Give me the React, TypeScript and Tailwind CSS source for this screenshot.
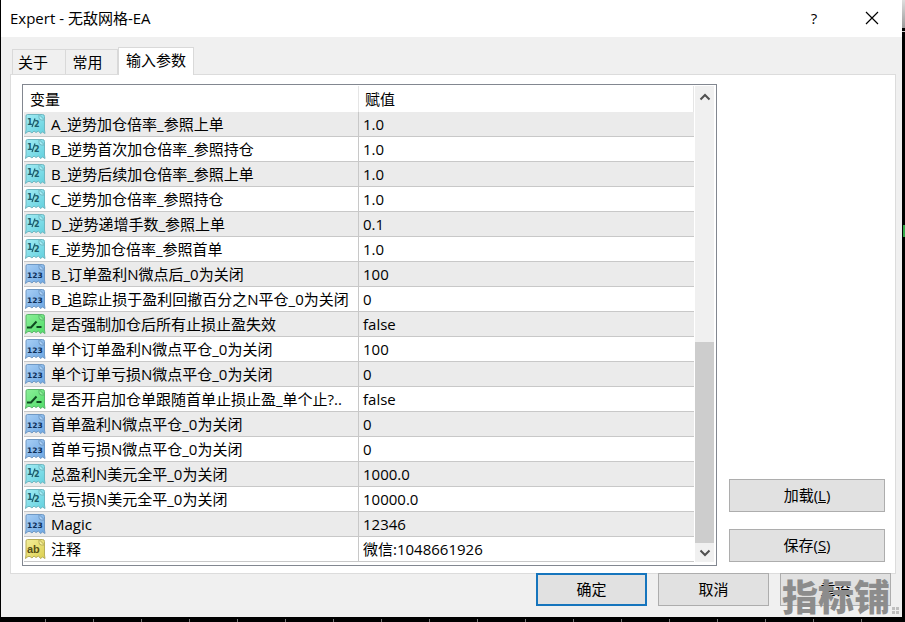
import type { ReactNode } from "react";

type Kind = "double" | "int" | "bool" | "string";

const rows: { kind: Kind; name: string; value: string }[] = [
  { kind: "double", name: "A_逆势加仓倍率_参照上单", value: "1.0" },
  { kind: "double", name: "B_逆势首次加仓倍率_参照持仓", value: "1.0" },
  { kind: "double", name: "B_逆势后续加仓倍率_参照上单", value: "1.0" },
  { kind: "double", name: "C_逆势加仓倍率_参照持仓", value: "1.0" },
  { kind: "double", name: "D_逆势递增手数_参照上单", value: "0.1" },
  { kind: "double", name: "E_逆势加仓倍率_参照首单", value: "1.0" },
  { kind: "int", name: "B_订单盈利N微点后_0为关闭", value: "100" },
  { kind: "int", name: "B_追踪止损于盈利回撤百分之N平仓_0为关闭", value: "0" },
  { kind: "bool", name: "是否强制加仓后所有止损止盈失效", value: "false" },
  { kind: "int", name: "单个订单盈利N微点平仓_0为关闭", value: "100" },
  { kind: "int", name: "单个订单亏损N微点平仓_0为关闭", value: "0" },
  { kind: "bool", name: "是否开启加仓单跟随首单止损止盈_单个止?..", value: "false" },
  { kind: "int", name: "首单盈利N微点平仓_0为关闭", value: "0" },
  { kind: "int", name: "首单亏损N微点平仓_0为关闭", value: "0" },
  { kind: "double", name: "总盈利N美元全平_0为关闭", value: "1000.0" },
  { kind: "double", name: "总亏损N美元全平_0为关闭", value: "10000.0" },
  { kind: "int", name: "Magic", value: "12346" },
  { kind: "string", name: "注释", value: "微信:1048661926" },
];

const palette: Record<Kind, { from: string; to: string; edge: string; ink: string }> = {
  double: { from: "#a4ecf4", to: "#62d0de", edge: "#6fb6c0", ink: "#1b5c6b" },
  int: { from: "#a9cff5", to: "#6ba6e2", edge: "#7099c4", ink: "#0d2f58" },
  bool: { from: "#8df09a", to: "#4fdc68", edge: "#5bb56c", ink: "#0e4a20" },
  string: { from: "#f3ee9b", to: "#dccf4e", edge: "#b8ae58", ink: "#574f14" },
};

function TypeIcon({ kind }: { kind: Kind }) {
  const { from, to, edge, ink } = palette[kind];
  return (
    <svg width="22" height="22" viewBox="0 0 22 22" className="shrink-0" aria-hidden="true">
      <defs>
        <linearGradient id={`fill-${kind}`} x1="0" y1="0" x2="1" y2="1">
          <stop offset="0" stopColor={from} />
          <stop offset="1" stopColor={to} />
        </linearGradient>
      </defs>
      <path
        d="M3.500 1.500H18.500Q20.500 1.500 20.500 3.500V17L21 20.500L18.500 19L16.500 20.500L14.500 18L12 19.500L10 18L8 20L6 18.500L4 18.500L1.500 20.500L2 17V3Q2 1.500 3.500 1.500Z"
        fill={`url(#fill-${kind})`}
        stroke={edge}
        strokeLinejoin="round"
      />
      <path d="M15 1.500V4.500Q15 7 17.500 7H20.500Z" fill={from} stroke={edge} strokeLinejoin="round" />
      {kind === "double" && (
        <g fill={ink} fontFamily="DejaVu Sans" fontWeight="bold">
          <text x="3" y="12" fontSize="8">1</text>
          <text x="10" y="14" fontSize="8">2</text>
          <path d="M11 5.500L8 14" stroke={ink} strokeWidth="1.200" />
        </g>
      )}
      {kind === "int" && (
        <text x="3" y="15" fontSize="7.500" fontFamily="DejaVu Sans" fontWeight="bold" fill={ink}>123</text>
      )}
      {kind === "string" && (
        <text x="3" y="15" fontSize="11" fontFamily="Liberation Sans" fontWeight="bold" fill={ink}>ab</text>
      )}
      {kind === "bool" && (
        <path d="M3 14.500H7L12.500 8.500M12.500 14H17.500" fill="none" stroke={ink} strokeWidth="2" />
      )}
    </svg>
  );
}

function DialogButton({ children, className = "" }: { children: ReactNode; className?: string }) {
  return (
    <button type="button" className={`h-[33px] border border-[#adadad] bg-[#e1e1e1] pb-px leading-6 ${className}`}>
      {children}
    </button>
  );
}

function Chevron({ d }: { d: string }) {
  return (
    <svg width="12" height="8" viewBox="0 0 12 8" aria-hidden="true">
      <path d={d} fill="none" stroke="#505050" strokeWidth="2" />
    </svg>
  );
}

export default function App() {
  return (
    <div className="flex bg-black pl-px font-['Open_Sans','Noto_Sans_CJK_SC',sans-serif] text-[15px] leading-6 text-black">
      <div className="min-w-0 flex-1">
        <main className="bg-[#f0f0f0]">
          {/* Title bar */}
          <header className="flex h-[37px] items-center bg-white pb-[2px] pl-[9px] pr-[23px]">
            <h1 className="flex-1">Expert - 无敌网格-EA</h1>
            <button type="button" aria-label="Help" className="mr-[45px] w-3">?</button>
            <button type="button" aria-label="Close">
              <svg width="14" height="14" viewBox="0 0 14 14" aria-hidden="true">
                <path d="M1 1L13 13M13 1L1 13" stroke="#000" strokeWidth="1.200" />
              </svg>
            </button>
          </header>

          {/* Tabs */}
          <div className="flex items-end pl-[11px] pt-[10px]" role="tablist">
            <button type="button" role="tab" aria-selected="false" className="h-[25px] w-[54px] border border-b-0 border-[#d9d9d9] pr-3">关于</button>
            <button type="button" role="tab" aria-selected="false" className="h-[25px] w-[52px] border border-b-0 border-l-0 border-[#d9d9d9] pr-2">常用</button>
            <button type="button" role="tab" aria-selected="true" className="relative -mb-px h-7 w-[76px] border border-b-0 border-[#d9d9d9] bg-white pb-1">输入参数</button>
          </div>

          <section className="ml-[9px] mr-[6px] flex gap-3 border border-[#dcdcdc] bg-white pb-[7px] pl-[11px] pr-[10px] pt-[9px]">
            {/* Parameter list */}
            <div className="flex min-w-0 flex-1 border border-[#828790] px-px pb-[3px] pt-px">
              <table className="min-w-0 flex-1 table-fixed border-separate border-spacing-0 self-start">
                <colgroup>
                  <col className="w-1/2" />
                  <col className="w-1/2" />
                </colgroup>
                <thead>
                  <tr className="h-[26px] text-left">
                    <th className="border-r border-[#e5e5e5] p-0 pl-[6px] font-normal leading-5">变量</th>
                    <th className="border-r border-[#e5e5e5] p-0 pl-[6px] font-normal leading-5">赋值</th>
                  </tr>
                </thead>
                <tbody>
                  {rows.map((row) => (
                    <tr key={row.name} className="h-[25px] odd:bg-[#ebebeb]">
                      <td className="border-b border-r border-[#c8c8c8] p-0">
                        <div className="flex h-6 items-center gap-[5px] whitespace-nowrap">
                          <TypeIcon kind={row.kind} />
                          <span>{row.name}</span>
                        </div>
                      </td>
                      <td className="border-b border-[#c8c8c8] p-0 pl-1">{row.value}</td>
                    </tr>
                  ))}
                </tbody>
              </table>
              <div className="ml-px mr-px flex w-[19px] flex-col bg-[#f0f0f0]">
                <button type="button" aria-label="Scroll up" className="grid h-[22px] place-items-center">
                  <Chevron d="M1.500 6.500L6 2L10.500 6.500" />
                </button>
                <div className="flex-1" />
                <div className="h-[201px] bg-[#cdcdcd]" />
                <button type="button" aria-label="Scroll down" className="grid h-[19px] place-items-center">
                  <Chevron d="M1.500 1.500L6 6L10.500 1.500" />
                </button>
              </div>
            </div>

            <div className="flex w-[156px] flex-col justify-end gap-[17px] pb-1">
              <DialogButton>加载(<u>L</u>)</DialogButton>
              <DialogButton>保存(<u>S</u>)</DialogButton>
            </div>
          </section>

          {/* Footer buttons */}
          <footer className="relative -mt-px flex justify-end gap-[11px] pb-[11px] pr-[11px]">
            <button type="button" className="h-[33px] w-[111px] border-2 border-[#1675bd] bg-[#e1e1e1] pb-px">确定</button>
            <DialogButton className="w-[111px]">取消</DialogButton>
            <DialogButton className="w-[111px]">重设</DialogButton>
            <span className="absolute bottom-[2px] right-3 font-['Noto_Sans_CJK_SC',sans-serif] text-4xl font-black leading-10 text-[#8c8c8c]">指标铺</span>
            <span className="absolute bottom-[3px] right-[3px] grid grid-cols-2 gap-px" aria-hidden="true">
              <i className="size-[3px] bg-[#bfbfbf]" />
              <i className="size-[3px] bg-[#bfbfbf]" />
              <i className="size-[3px] bg-[#bfbfbf]" />
              <i className="size-[3px] bg-[#bfbfbf]" />
            </span>
          </footer>
        </main>
        {/* Chart axis under the dialog */}
        <div className="h-[5px] bg-black pt-[2px]">
          <div className="h-[3px] bg-[repeating-linear-gradient(90deg,transparent_0_44px,#777_44px_45px,transparent_45px_48px)]" />
        </div>
      </div>

      {/* Chart edge beside the dialog */}
      <div className="flex w-[3px] flex-col bg-black">
        <div className="h-7 bg-linear-to-b from-[#dedede] to-[#9a9a9a]" />
        <div className="mt-[3px] h-px bg-[#cccccc]" />
        <div className="ml-px mt-[193px] h-3 bg-[#35a84a]" />
      </div>
    </div>
  );
}
